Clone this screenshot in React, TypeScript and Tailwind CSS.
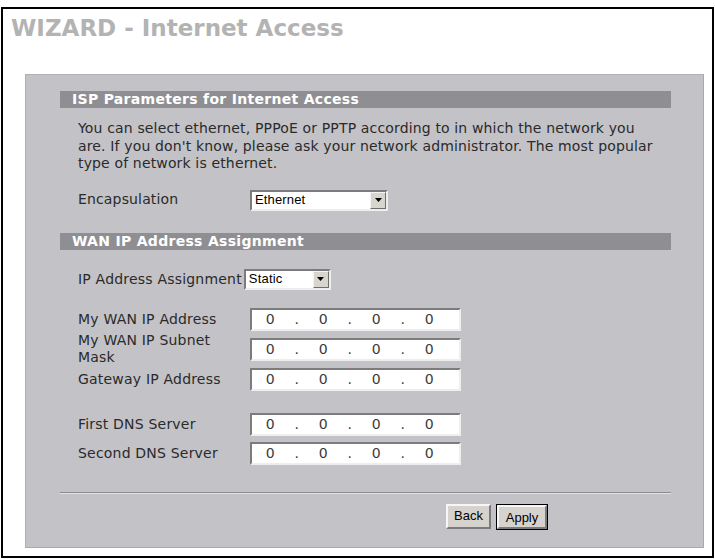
import React from 'react';

const verdana = { fontFamily: '"DejaVu Sans", Verdana, sans-serif' };
const arial = { fontFamily: '"Liberation Sans", Arial, sans-serif' };

function SectionBar({ title }: { title: string }) {
  return (
    <div className="h-[17px] bg-[#8f8f93] flex items-center pl-[12px]">
      <span className="text-[14px] font-bold text-white tracking-[0.3px] leading-[17px]" style={verdana}>
        {title}
      </span>
    </div>
  );
}

function Select({ value, width }: { value: string; width: string }) {
  return (
    <div
      className={`${width} h-[21px] bg-white border-2 border-t-[#7c7c7c] border-l-[#7c7c7c] border-b-[#eeeeee] border-r-[#eeeeee] flex items-center`}
    >
      <span className="flex-1 pl-[3px] text-[13px] text-black" style={arial}>
        {value}
      </span>
      <div className="w-[16px] h-[17px] bg-[#d8d5cf] border border-t-[#f4f4f4] border-l-[#f4f4f4] border-b-[#6e6e6e] border-r-[#6e6e6e] flex items-center justify-center">
        <svg width="7" height="4" viewBox="0 0 7 4">
          <path d="M0 0h7L3.5 4z" fill="#000" />
        </svg>
      </div>
    </div>
  );
}

function IpField() {
  return (
    <div
      className="w-[211px] h-[23px] shrink-0 bg-white border-2 border-t-[#7c7c7c] border-l-[#7c7c7c] border-b-[#eeeeee] border-r-[#eeeeee] flex items-center pl-[5px] text-[14px] text-[#3a3a3a]"
      style={verdana}
    >
      <span className="w-[26.5px] text-center">0</span>
      <span className="w-[26.5px] text-center">.</span>
      <span className="w-[26.5px] text-center">0</span>
      <span className="w-[26.5px] text-center">.</span>
      <span className="w-[26.5px] text-center">0</span>
      <span className="w-[26.5px] text-center">.</span>
      <span className="w-[26.5px] text-center">0</span>
    </div>
  );
}

function IpRow({ label, className = '' }: { label: React.ReactNode; className?: string }) {
  return (
    <div className={`flex items-center h-[23px] ${className}`}>
      <div className="w-[172px] shrink-0 text-[14px] leading-[17px] tracking-[0.2px] text-[#2a2a2a]" style={verdana}>
        {label}
      </div>
      <IpField />
    </div>
  );
}

export default function App() {
  return (
    <div className="w-[715px] h-[559px] bg-white pt-[7px] pl-[1px]">
      <div className="w-[713px] h-[551px] border-2 border-black flex flex-col">
        {/* Page title */}
        <h1
          className="pl-[8px] pt-[5px] h-[65px] text-[23px] font-bold text-[#b3b3b3] leading-[28px]"
          style={verdana}
        >
          WIZARD - Internet Access
        </h1>

        {/* Gray wizard panel */}
        <div className="ml-[22px] mr-[8px] h-[474px] bg-[#c3c2c7] border border-t-[#b0b0b4] border-l-[#b0b0b4] border-b-[#a9a9ad] border-r-[#a9a9ad] pt-[16px] pl-[34px] pr-[32px] flex flex-col">
          <SectionBar title="ISP Parameters for Internet Access" />

          <div
            className="pl-[18px] mt-[12px] text-[14px] leading-[17.5px] tracking-[0.15px] text-[#2a2a2a]"
            style={verdana}
          >
            <p>
              You can select ethernet, PPPoE or PPTP according to in which the network you
              <br />
              are. If you don't know, please ask your network administrator. The most popular
              <br />
              type of network is ethernet.
            </p>

            <div className="flex items-center mt-[17px]">
              <span className="w-[172px]">Encapsulation</span>
              <Select value="Ethernet" width="w-[138px]" />
            </div>
          </div>

          <div className="mt-[22px]">
            <SectionBar title="WAN IP Address Assignment" />
          </div>

          <div className="pl-[18px]">
            <div
              className="flex items-center mt-[19px] text-[14px] tracking-[0.2px] text-[#2a2a2a]"
              style={verdana}
            >
              <span className="mr-[2px]">IP Address Assignment</span>
              <Select value="Static" width="w-[87px]" />
            </div>

            <IpRow label="My WAN IP Address" className="mt-[18px]" />
            <IpRow
              label={
                <>
                  My WAN IP Subnet
                  <br />
                  Mask
                </>
              }
              className="mt-[7px]"
            />
            <IpRow label="Gateway IP Address" className="mt-[7px]" />
            <IpRow label="First DNS Server" className="mt-[22px]" />
            <IpRow label="Second DNS Server" className="mt-[6px]" />
          </div>

          {/* Separator */}
          <div className="mt-[27px] h-[2px] border-t border-t-[#8c8c8c] border-b border-b-[#e4e4e4]" />

          {/* Buttons */}
          <div className="flex gap-[5px] mt-[10px] pl-[386px]" style={arial}>
            <button className="w-[45px] h-[25px] bg-[#d6d3ce] border-2 border-t-[#f6f6f6] border-l-[#f6f6f6] border-b-[#7a7a7a] border-r-[#7a7a7a] text-[13px] text-black">
              Back
            </button>
            <div className="border border-black">
              <button className="w-[50px] h-[24px] bg-[#d6d3ce] border-2 border-t-[#f6f6f6] border-l-[#f6f6f6] border-b-[#7a7a7a] border-r-[#7a7a7a] text-[13px] text-black">
                Apply
              </button>
            </div>
          </div>
        </div>
      </div>
    </div>
  );
}
